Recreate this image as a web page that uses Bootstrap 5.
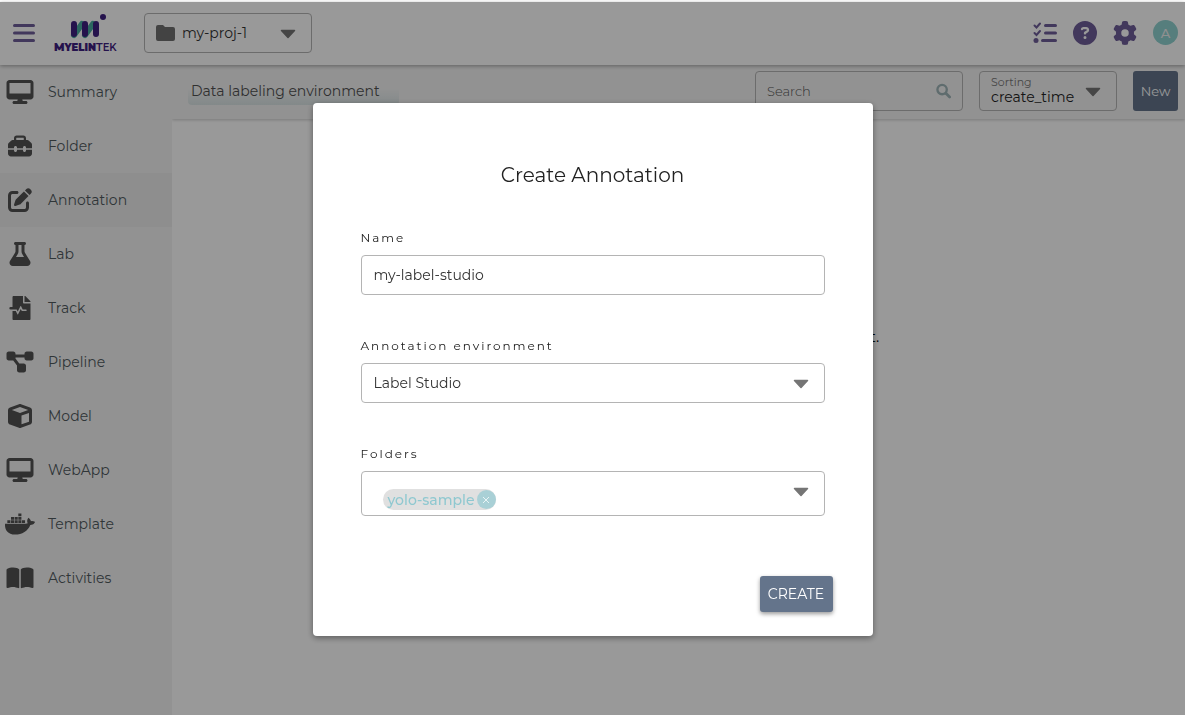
<!DOCTYPE html>
<html lang="en">
<head>
<meta charset="utf-8">
<meta name="viewport" content="width=device-width, initial-scale=1">
<title>MyelinTek – Data labeling environment</title>
<link href="https://cdn.jsdelivr.net/npm/bootstrap@5.3.0/dist/css/bootstrap.min.css" rel="stylesheet">
<style>
:root{--ink:#525252;--brand:#6f5e99;--slate:#64748b;--rule:#b4b4b4}
body{font-family:Montserrat,Inter,"Open Sans",sans-serif;font-size:14px;font-weight:400;line-height:20px;color:#222;background:#fff}
.shell{min-height:100vh;border-top:2px solid #fff}
.topbar{height:63px;padding:0 7px 2px 12px;background:#fff;box-shadow:0 1px 4px rgba(0,0,0,.35);z-index:3}
.icon-btn{border:0;background:none;padding:0;color:var(--brand);line-height:0}
.box{border:1px solid var(--rule);border-radius:4px;background-color:#fff;color:#333}
.box.clear{background-color:transparent}
.pick{appearance:none;width:100%;cursor:pointer;background:url("data:image/svg+xml,%3Csvg xmlns='http://www.w3.org/2000/svg' viewBox='0 0 16 10'%3E%3Cpath d='M1.500 1.500h13L8 8.500z' fill='%23757575' stroke='%23757575' stroke-width='1.500' stroke-linejoin='round'/%3E%3C/svg%3E") no-repeat right 15px top 15px/16px 10px}
.proj{width:168px;height:40px;margin-left:24px}
.proj .pick{height:38px;border:0;background-color:transparent;padding:0 0 0 37px;color:#333}
.proj svg{position:absolute;left:11px;top:11px;pointer-events:none;color:#707070}
.avatar{width:25px;height:25px;background:#90d2d0;color:#f0f0f0;font-size:13px;font-weight:500}
.side{width:172px;background:#f4f4f4;z-index:2}
.side a{height:54px;padding-left:5px;color:#505a5e;text-decoration:none;gap:13px}
.side a.active{background:#ededed}
.side svg{width:30px;height:24px;color:var(--ink);flex:none}
.tools{height:54px;padding:0 7px 2px 16px;background:#f4f4f4;box-shadow:0 1px 3px rgba(0,0,0,.2)}
.page-title{width:211px;height:28px;padding:0 3px;font-size:14px;line-height:28px;font-weight:400;color:#505050;border-radius:4px;background:linear-gradient(#f4f4f4 40%,#dbe5e6)}
.search{width:208px;height:40px;padding:0 11px}
.search input{border:0;outline:0;background:none;font-size:13px;font-weight:300;min-width:0}
.search input::placeholder{color:#555;opacity:1}
.sort{width:138px;height:40px}
.sort label{position:absolute;left:11px;top:3px;font-size:11px;line-height:14px;color:#777}
.sort .pick{height:38px;border:0;background-color:transparent;padding:12px 0 0 11px;color:#222}
.slate{background:var(--slate);color:#fff;border:0;border-radius:3px}
.new{width:45px;height:40px;font-size:13px}
.empty{padding-top:208px;font-size:15px;color:#000}
.shade{position:fixed;inset:2px 0 0 0;background:rgba(0,0,0,.4);z-index:10;padding-top:22px}
.panel{width:560px;padding:60px 40px 24px;border-radius:4px;box-shadow:0 2px 6px rgba(0,0,0,.4)}
.panel h1{font-size:20px;line-height:24px;font-weight:400;color:#222;margin:0 0 43px}
.field{padding:0 8px;margin-bottom:43px}
.field.last{margin-bottom:60px}
.field .caption{display:block;font-size:12px;line-height:16px;letter-spacing:2px;margin-bottom:9px;color:#222}
.field .entry{height:40px;width:100%;padding:0 12px}
.chips{height:45px;padding:17px 0 0 21px}
.chip{height:21px;border-radius:11px;background:#e0e0e0;color:#8fc8d0;padding-left:5px;font-weight:500}
.chip button{border:0;padding:0;margin-left:2px;width:19px;height:19px;background:#a9d0d6;color:#e8f4f5;line-height:0}
.create{width:73px;height:36px;padding:0;box-shadow:0 2px 4px rgba(0,0,0,.4)}
</style>
</head>
<body>
<svg class="d-none" xmlns="http://www.w3.org/2000/svg">
<symbol id="desktop" viewBox="0 0 576 512"><path fill="currentColor" d="M64 0C28.700 0 0 28.700 0 64V352c0 35.300 28.700 64 64 64H240l-10.700 32H160c-17.700 0-32 14.300-32 32s14.300 32 32 32H416c17.700 0 32-14.300 32-32s-14.300-32-32-32H346.700L336 416H512c35.300 0 64-28.700 64-64V64c0-35.300-28.700-64-64-64H64zM512 64V288H64V64H512z"/></symbol>
<symbol id="toolbox" viewBox="0 0 512 512"><path fill="currentColor" d="M176 88v40H336V88c0-4.400-3.600-8-8-8H184c-4.400 0-8 3.600-8 8zm-48 40V88c0-30.900 25.100-56 56-56H328c30.900 0 56 25.100 56 56v40h28.100c12.700 0 24.900 5.100 33.900 14.100l51.900 51.900c9 9 14.100 21.200 14.100 33.900V304H384V288c0-17.700-14.300-32-32-32s-32 14.300-32 32v16H192V288c0-17.700-14.300-32-32-32s-32 14.300-32 32v16H0V227.900c0-12.700 5.100-24.900 14.100-33.900l51.900-51.900c9-9 21.200-14.100 33.900-14.100H128zM0 416V336H128v16c0 17.700 14.300 32 32 32s32-14.300 32-32V336H320v16c0 17.700 14.300 32 32 32s32-14.300 32-32V336H512v80c0 35.300-28.700 64-64 64H64c-35.300 0-64-28.700-64-64z"/></symbol>
<symbol id="pen" viewBox="0 0 512 512"><path fill="currentColor" d="M471.600 21.700c-21.900-21.900-57.300-21.900-79.200 0L362.300 51.700l97.900 97.900 30.100-30.100c21.900-21.900 21.900-57.300 0-79.200L471.600 21.700zm-299.200 220c-6.100 6.100-10.800 13.600-13.500 21.900l-29.600 88.800c-2.900 8.600-.6 18.100 5.800 24.600s15.900 8.700 24.600 5.800l88.800-29.600c8.200-2.700 15.700-7.400 21.900-13.500L437.700 172.300 339.700 74.300 172.400 241.700zM96 64C43 64 0 107 0 160V416c0 53 43 96 96 96H352c53 0 96-43 96-96V320c0-17.700-14.300-32-32-32s-32 14.300-32 32v96c0 17.700-14.300 32-32 32H96c-17.700 0-32-14.300-32-32V160c0-17.700 14.300-32 32-32h96c17.700 0 32-14.300 32-32s-14.300-32-32-32H96z"/></symbol>
<symbol id="flask" viewBox="0 0 448 512"><path fill="currentColor" d="M288 0H128C110.300 0 96 14.300 96 32s14.300 32 32 32V196.800c0 11.800-3.300 23.500-9.500 33.500L10.300 406.200C3.600 417.200 0 429.700 0 442.600C0 480.900 31.100 512 69.400 512H378.600c38.300 0 69.400-31.100 69.400-69.400c0-12.800-3.600-25.400-10.300-36.400L329.500 230.400c-6.200-10.100-9.500-21.700-9.500-33.500V64c17.700 0 32-14.300 32-32s-14.300-32-32-32H288zM192 196.800V64h64V196.800c0 23.700 6.600 46.900 19 67.100L309.500 320h-171L173 263.900c12.400-20.200 19-43.400 19-67.100z"/></symbol>
<symbol id="wave" viewBox="0 0 448 512"><path fill="currentColor" d="M288 136V0H88C74.700 0 64 10.700 64 24v208H24a24 24 0 0 0 0 56h124.900c3 0 5.800 1.700 7.200 4.400l19.900 39.800 56.800-113.700c2.900-5.900 11.400-5.900 14.300 0l34.700 69.500H352c8.800 0 16 7.200 16 16s-7.200 16-16 16h-89.900L240 275.800l-56.800 113.700c-2.900 5.900-11.400 5.900-14.300 0L134.100 320H64v168c0 13.300 10.700 24 24 24h336c13.300 0 24-10.700 24-24V160H312c-13.200 0-24-10.800-24-24zm153-31L343.100 7c-4.500-4.500-10.600-7-17-7H320v128h128v-6.100c0-6.300-2.500-12.400-7-16.900z"/></symbol>
<symbol id="flow" viewBox="0 0 576 512"><path fill="currentColor" d="M0 80C0 53.500 21.500 32 48 32h96c26.500 0 48 21.500 48 48V96H384V80c0-26.500 21.500-48 48-48h96c26.500 0 48 21.500 48 48v96c0 26.500-21.500 48-48 48H432c-26.500 0-48-21.500-48-48V160H192v16c0 1.700-.1 3.400-.3 5L272 288h96c26.500 0 48 21.500 48 48v96c0 26.500-21.500 48-48 48H272c-26.500 0-48-21.500-48-48V336c0-1.700 .1-3.400 .3-5L144 224H48c-26.500 0-48-21.500-48-48V80z"/></symbol>
<symbol id="cube" viewBox="0 0 512 512"><path fill="currentColor" d="M234.500 5.700c13.900-5 29.100-5 43.100 0l192 68.600C495 83.400 512 107.500 512 134.600V377.400c0 27-17 51.200-42.500 60.300l-192 68.600c-13.900 5-29.100 5-43.100 0l-192-68.600C17 428.600 0 404.500 0 377.400V134.600c0-27 17-51.200 42.500-60.300l192-68.600zM256 66L82.300 128 256 190l173.700-62L256 66zm32 368.600l160-57.100v-188L288 246.600v188z"/></symbol>
<symbol id="docker" viewBox="0 0 640 512"><path fill="currentColor" d="M349.900 236.300h-66.100v-59.400h66.100v59.400zm0-204.300h-66.100v60.700h66.100V32zm78.200 144.800H362v59.400h66.100v-59.400zm-156.300-72.100h-66.100v60.100h66.100v-60.100zm78.100 0h-66.100v60.100h66.100v-60.100zm276.800 100c-14.400-9.700-47.600-13.200-73.100-8.400-3.300-24-16.700-44.900-41.100-63.700l-14-9.300-9.300 14c-18.400 27.800-23.400 73.600-3.700 103.800-8.700 4.700-25.800 11.100-48.400 10.700H2.400c-8.700 50.800 5.800 116.800 44 162.100 37.100 43.900 92.700 66.200 165.400 66.200 157.400 0 273.900-72.500 328.400-204.200 21.400.4 67.600.1 91.300-45.200 1.500-2.500 6.600-13.200 8.500-17.100l-13.300-8.900zm-511.100-27.900h-66v59.400h66.100v-59.400zm78.100 0h-66.100v59.400h66.100v-59.400zm78.100 0h-66.100v59.400h66.100v-59.400zm-78.100-72.100h-66.100v60.100h66.100v-60.100z"/></symbol>
<symbol id="book" viewBox="0 0 576 512"><path fill="currentColor" d="M249.600 471.500c10.800 3.800 22.400-4.100 22.400-15.500V78.600c0-4.200-1.600-8.400-5-11C247.400 52 202.400 32 144 32C93.500 32 46.300 45.300 18.100 56.100C6.800 60.500 0 71.700 0 83.800V454.100c0 11.900 12.800 20.200 24.100 16.500C55.600 460.100 105.500 448 144 448c33.900 0 79 14 105.600 23.500zm76.800 0C353 462 398.100 448 432 448c38.500 0 88.400 12.100 119.900 22.600c11.300 3.800 24.100-4.600 24.100-16.500V83.800c0-12.100-6.800-23.300-18.100-27.600C529.700 45.300 482.500 32 432 32c-58.400 0-103.400 20-123 35.600c-3.300 2.600-5 6.800-5 11V456c0 11.400 11.700 19.300 22.400 15.500z"/></symbol>
</svg>

<div class="shell d-flex flex-column">
  <header class="topbar d-flex align-items-center position-relative">
    <button class="icon-btn" type="button" aria-label="Menu"><svg width="24" height="20" viewBox="0 0 24 20" stroke="currentColor" stroke-width="3" stroke-linecap="round"><path d="M2.500 2.500h19M2.500 10h19M2.500 17.500h19"/></svg></button>
    <a href="#" aria-label="MyelinTek" class="ms-3"><svg width="68" height="42" viewBox="0 0 68 42">
      <path d="M22 23L30 12M33 23L41 12" stroke="#4aaca0" stroke-width="6" stroke-linecap="round"/><path d="M22 12V22M33 12V22M44 12V22" stroke="#3f2080" stroke-width="6" stroke-linecap="round"/><circle cx="51" cy="5" r="3" fill="#3f2080"/>
      <text x="2" y="39" font-family="Montserrat, Inter, sans-serif" font-weight="900" font-size="11" fill="#3f2080">M<tspan font-size="10">YELIN</tspan><tspan font-weight="600">T</tspan><tspan font-weight="600" font-size="10">EK</tspan></text></svg></a>
    <div class="box proj position-relative"><svg width="19" height="16" viewBox="0 0 19 16" fill="currentColor"><path d="M2 0h5l2 2h8a2 2 0 0 1 2 2v10a2 2 0 0 1-2 2H2a2 2 0 0 1-2-2V2a2 2 0 0 1 2-2z"/></svg>
      <select class="pick" aria-label="Project"><option>my-proj-1</option></select></div>
    <nav class="ms-auto d-flex align-items-center gap-3">
      <button class="icon-btn" type="button" aria-label="Tasks"><svg width="24" height="24" viewBox="0 0 24 24" fill="none" stroke="currentColor" stroke-width="3" stroke-linecap="round"><path d="M12.500 4.500h10M12.500 12h10M9.500 19.500h13"/><path d="M1.500 4.500L3.500 6.500 7 2.500M1.500 12l2 2L7 10" stroke-width="2"/><circle cx="3" cy="19.500" r="2.500" fill="currentColor" stroke="none"/></svg></button>
      <button class="icon-btn" type="button" aria-label="Help"><svg width="24" height="24" viewBox="0 0 512 512" fill="currentColor"><path d="M256 512A256 256 0 1 0 256 0a256 256 0 1 0 0 512zM169.800 165.300c7.900-22.300 29.100-37.300 52.800-37.300h58.300c34.900 0 63.100 28.300 63.100 63.100c0 22.600-12.100 43.500-31.700 54.800L280 264.400c-.2 13-10.900 23.600-24 23.600c-13.300 0-24-10.700-24-24V250.500c0-8.600 4.600-16.500 12.100-20.800l44.300-25.400c4.700-2.700 7.600-7.700 7.600-13.100c0-8.400-6.800-15.100-15.100-15.100H222.600c-3.400 0-6.400 2.100-7.500 5.300l-.4 1.200c-4.400 12.500-18.200 19-30.600 14.600s-19-18.200-14.600-30.600l.3-1.300zM224 352a32 32 0 1 1 64 0 32 32 0 1 1 -64 0z"/></svg></button>
      <button class="icon-btn" type="button" aria-label="Settings"><svg width="24" height="24" viewBox="0 0 512 512" fill="currentColor"><path d="M495.900 166.600c3.200 8.700 .5 18.400-6.400 24.600l-43.300 39.400c1.100 8.300 1.700 16.800 1.700 25.400s-.6 17.100-1.700 25.400l43.300 39.400c6.900 6.200 9.600 15.900 6.400 24.600c-4.400 11.900-9.700 23.300-15.800 34.300l-4.700 8.100c-6.600 11-14 21.400-22.100 31.200c-5.900 7.200-15.700 9.600-24.500 6.800l-55.700-17.700c-13.400 10.300-28.200 18.900-44 25.400l-12.500 57.100c-2 9.100-9 16.300-18.200 17.800c-13.800 2.300-28 3.500-42.500 3.500s-28.700-1.200-42.500-3.500c-9.200-1.500-16.200-8.700-18.200-17.800l-12.500-57.100c-15.800-6.500-30.600-15.100-44-25.400L83.100 425.900c-8.800 2.800-18.600 .3-24.500-6.800c-8.100-9.800-15.500-20.200-22.100-31.200l-4.700-8.100c-6.100-11-11.400-22.400-15.800-34.300c-3.200-8.700-.5-18.400 6.400-24.600l43.300-39.400C64.600 273.100 64 264.600 64 256s.6-17.100 1.700-25.400L22.400 191.200c-6.900-6.200-9.600-15.900-6.400-24.600c4.400-11.900 9.700-23.300 15.800-34.300l4.700-8.100c6.600-11 14-21.400 22.100-31.200c5.900-7.200 15.700-9.600 24.500-6.800l55.700 17.700c13.400-10.300 28.200-18.900 44-25.400l12.500-57.100c2-9.100 9-16.300 18.200-17.800C227.300 1.200 241.500 0 256 0s28.700 1.200 42.500 3.500c9.200 1.500 16.200 8.700 18.200 17.800l12.500 57.100c15.800 6.500 30.600 15.100 44 25.400l55.700-17.700c8.800-2.800 18.600-.3 24.500 6.800c8.100 9.800 15.500 20.200 22.100 31.200l4.700 8.100c6.100 11 11.400 22.400 15.800 34.300zM256 336a80 80 0 1 0 0-160 80 80 0 1 0 0 160z"/></svg></button>
      <button class="icon-btn avatar rounded-circle d-flex align-items-center justify-content-center" type="button" aria-label="Account">A</button>
    </nav>
  </header>

  <div class="d-flex flex-grow-1">
    <nav class="side flex-shrink-0 position-relative">
      <a href="#" class="d-flex align-items-center"><svg><use href="#desktop"/></svg>Summary</a>
      <a href="#" class="d-flex align-items-center"><svg><use href="#toolbox"/></svg>Folder</a>
      <a href="#" class="d-flex align-items-center active"><svg><use href="#pen"/></svg>Annotation</a>
      <a href="#" class="d-flex align-items-center"><svg><use href="#flask"/></svg>Lab</a>
      <a href="#" class="d-flex align-items-center"><svg><use href="#wave"/></svg>Track</a>
      <a href="#" class="d-flex align-items-center"><svg><use href="#flow"/></svg>Pipeline</a>
      <a href="#" class="d-flex align-items-center"><svg><use href="#cube"/></svg>Model</a>
      <a href="#" class="d-flex align-items-center"><svg><use href="#desktop"/></svg>WebApp</a>
      <a href="#" class="d-flex align-items-center"><svg><use href="#docker"/></svg>Template</a>
      <a href="#" class="d-flex align-items-center"><svg><use href="#book"/></svg>Activities</a>
    </nav>
    <main class="flex-grow-1 d-flex flex-column">
      <div class="tools d-flex align-items-center gap-3">
        <h2 class="page-title m-0">Data labeling environment</h2>
        <div class="box clear search d-flex align-items-center ms-auto">
          <input class="flex-grow-1 p-0" type="search" placeholder="Search" aria-label="Search">
          <svg width="16" height="16" viewBox="0 0 16 16" fill="none" stroke="#9fb4b7" stroke-linecap="round"><circle cx="6.500" cy="6.500" r="5" stroke-width="2.500"/><path d="M10.500 10.500l4 4" stroke-width="3"/></svg>
        </div>
        <div class="box clear sort position-relative"><label for="sorting">Sorting</label><select id="sorting" class="pick"><option>create_time</option></select></div>
        <button class="slate new p-0" type="button">New</button>
      </div>
      <p class="empty text-center m-0">There are no any available data labeling environment.</p>
    </main>
  </div>
</div>

<div class="shade d-flex align-items-center justify-content-center">
  <form class="panel bg-white" role="dialog" aria-labelledby="dlg">
    <h1 id="dlg" class="text-center">Create Annotation</h1>
    <div class="field"><label class="caption" for="name">Name</label><input id="name" class="box entry" type="text" value="my-label-studio"></div>
    <div class="field"><label class="caption" for="env">Annotation environment</label><select id="env" class="box entry pick"><option>Label Studio</option></select></div>
    <div class="field last"><span class="caption" id="fl">Folders</span>
      <div class="box pick chips d-flex align-items-start" role="group" aria-labelledby="fl"><span class="chip d-inline-flex align-items-center">yolo-sample<button type="button" class="rounded-circle" aria-label="Remove yolo-sample"><svg width="8" height="8" viewBox="0 0 8 8" stroke="currentColor"><path d="M1 1l6 6M7 1L1 7"/></svg></button></span></div></div>
    <div class="text-end"><button class="slate create" type="button">CREATE</button></div>
  </form>
</div>
<script src="https://cdn.jsdelivr.net/npm/bootstrap@5.3.0/dist/js/bootstrap.bundle.min.js"></script>
</body>
</html>
